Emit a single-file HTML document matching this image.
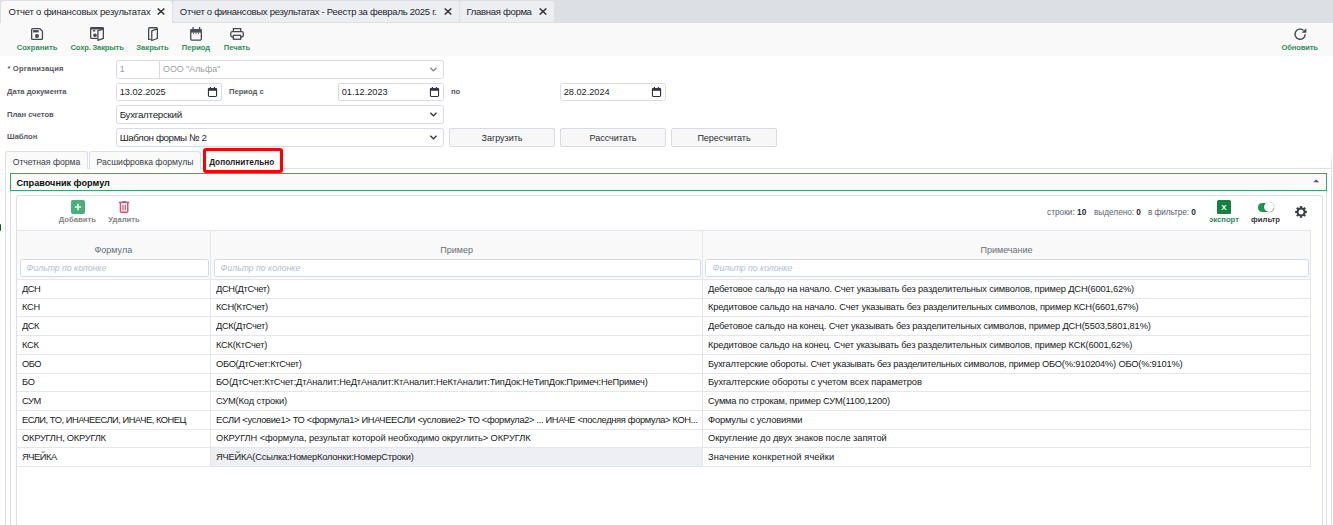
<!DOCTYPE html>
<html lang="ru"><head><meta charset="utf-8"><title>Отчет о финансовых результатах</title>
<style>
*{box-sizing:border-box;margin:0;padding:0}
html,body{width:1333px;height:525px;overflow:hidden;background:#fff}
body{font-family:"Liberation Sans",sans-serif;font-size:9px;color:#1d1d1f;position:relative}
.abs{position:absolute}
i{font-style:normal}
.tabbar{left:0;top:0;width:1333px;height:23px;background:#dcdfe4}
.ttab{position:absolute;top:1px;height:21px;border-radius:2.5px;background:#eceef2;font-size:9.5px;line-height:22.6px;padding-left:8.5px;white-space:nowrap;color:#23252b}
.ttab.act{background:#f9f9f9;height:22px;border-radius:3px 3px 0 0}
.ttab .x{position:absolute;right:7.2px;top:7.1px;width:8px;height:7px}
.toolbar{left:0;top:23px;width:1333px;height:33px;background:#f9f9f9}
.tbtn{position:absolute;top:42.7px;font-size:7.6px;line-height:9px;font-weight:bold;color:#2f8f5b;white-space:nowrap;transform:translateX(-50%)}
.ico{position:absolute}
.lbl{position:absolute;font-size:7.6px;line-height:9px;font-weight:bold;color:#56575e;white-space:nowrap}
.inp{position:absolute;border:1px solid #d7dae8;border-radius:2.5px;background:#fff;font-size:9.2px;white-space:nowrap;padding-left:2.7px}
.btn{position:absolute;top:128px;height:18.5px;width:106px;border:1px solid #d9dbe3;border-radius:2px;background:#f7f7f8;font-size:9px;line-height:19px;text-align:center;color:#2a2c33}
.ptab{position:absolute;top:151px;height:18px;border:1px solid #dcdfe9;border-bottom:none;border-radius:3px 3px 0 0;background:#fafafa;font-size:8.65px;line-height:20.5px;text-align:center;color:#3a3c44;white-space:nowrap}
.vline{position:absolute;width:1px;background:#dcdfeb}
.hline{position:absolute;height:1px;background:#dcdfeb}
.hdr{position:absolute;top:244.5px;font-size:9px;line-height:10px;color:#696c77;white-space:nowrap;transform:translateX(-50%)}
.flt{position:absolute;top:259px;height:18px;border:1px solid #d5d8e8;border-radius:2.5px;background:#fff;font-size:8.7px;font-style:italic;color:#b5bad2;line-height:16.5px;padding-left:5.5px}
.row{position:absolute;left:17px;width:1294px;border-bottom:1px solid #e3e5f0;font-size:9.3px;white-space:nowrap;color:#17181c}
.row span{position:absolute;top:0;overflow:hidden}
.row .sel{position:absolute;left:194px;width:491px;top:0;bottom:0;background:#eeeff5}
.c1{left:5px;width:188px}.c2{left:199px;width:486px}.c3{left:691px;width:600px}
.cnt{position:absolute;top:206.5px;font-size:8.3px;line-height:10px;color:#5b5f72;white-space:nowrap}
.cnt b{color:#2a2c3a}
.glbl{position:absolute;top:214.7px;font-size:7.7px;line-height:9px;font-weight:bold;white-space:nowrap;transform:translateX(-50%)}
</style></head><body>
<div class="abs tabbar"></div>
<div class="ttab act" style="left:1px;width:171px;padding-left:7.500px;letter-spacing:-0.180px">Отчет о финансовых результатах<svg class="x" viewBox="0 0 8 7"><path d="M0.700 0.500L7.300 6.500M7.300 0.500L0.700 6.500" stroke="#2b2d33" stroke-width="1.450"/></svg></div>
<div class="ttab" style="left:173px;width:286px;padding-left:6.800px;letter-spacing:-0.265px">Отчет о финансовых результатах - Реестр за февраль 2025 г.<svg class="x" viewBox="0 0 8 7"><path d="M0.700 0.500L7.300 6.500M7.300 0.500L0.700 6.500" stroke="#2b2d33" stroke-width="1.450"/></svg></div>
<div class="ttab" style="left:460px;width:94px;padding-left:6.500px;letter-spacing:-0.300px">Главная форма<svg class="x" viewBox="0 0 8 7"><path d="M0.700 0.500L7.300 6.500M7.300 0.500L0.700 6.500" stroke="#2b2d33" stroke-width="1.450"/></svg></div>
<div class="abs toolbar"></div>

<!-- toolbar icons -->
<svg class="ico" style="left:28px;top:25px" width="18" height="18" viewBox="28 25 18 18"><path d="M32.650 28.700H39.900L42.450 31.250V38.400a1 1 0 0 1-1 1H32.650a1 1 0 0 1-1-1V29.700a1 1 0 0 1 1-1z" fill="none" stroke="#45484f" stroke-width="1.300"/><rect x="33.100" y="30.100" width="5.600" height="2.300" fill="#45484f"/><circle cx="37" cy="36" r="2" fill="#45484f"/></svg>
<svg class="ico" style="left:88px;top:25px" width="18" height="18" viewBox="88 25 18 18"><path d="M97 38.400H91.650a1 1 0 0 1-1-1V28.650a1 1 0 0 1 1-1H102.350a1 1 0 0 1 1 1V38.300" fill="none" stroke="#45484f" stroke-width="1.300"/><rect x="90.300" y="27.200" width="13.500" height="2.200" rx="0.800" fill="#45484f"/><rect x="92.900" y="30.100" width="2.400" height="1.400" fill="#45484f"/><circle cx="95" cy="35.200" r="1.800" fill="#45484f"/><path d="M97.900 30.900L103.350 28.900V38.400L97.900 40.400z" fill="#f9f9f9" stroke="#45484f" stroke-width="1.300" stroke-linejoin="round"/></svg>
<svg class="ico" style="left:145px;top:25px" width="18" height="18" viewBox="145 25 18 18"><path d="M150.700 39.300H148.650V28.750a1 1 0 0 1 1-1H156.350a1 1 0 0 1 1 1V38.400" fill="none" stroke="#45484f" stroke-width="1.300"/><path d="M151.750 30.900L157.350 28.800V38.500L151.750 40.500z" fill="#f9f9f9" stroke="#45484f" stroke-width="1.300" stroke-linejoin="round"/></svg>
<svg class="ico" style="left:187px;top:25px" width="18" height="18" viewBox="187 25 18 18"><rect x="190.750" y="29.750" width="10.600" height="10.350" rx="1" fill="none" stroke="#45484f" stroke-width="1.300"/><rect x="190.500" y="29.300" width="11.100" height="3.300" fill="#4d5058"/><path d="M193.100 27.100v2.600M199.600 27.100v2.600" stroke="#45484f" stroke-width="1.300"/><path d="M193.600 32.500v1.700M196.050 32.500v1.700M198.500 32.500v1.700" stroke="#45484f" stroke-width="1" opacity="0.800"/></svg>
<svg class="ico" style="left:228px;top:25px" width="18" height="18" viewBox="228 25 18 18"><path d="M233.400 31.800V28.650h7.300v3.150" fill="none" stroke="#45484f" stroke-width="1.300"/><rect x="230.750" y="31.600" width="12.600" height="5.400" rx="1.700" fill="none" stroke="#45484f" stroke-width="1.300"/><rect x="233.400" y="35.300" width="7.300" height="3.950" fill="#f9f9f9" stroke="#45484f" stroke-width="1.300"/></svg>
<svg class="ico" style="left:1292px;top:27px" width="16" height="14" viewBox="0 0 16 14"><path d="M13.200 7.200a5.100 5.100 0 1 1-1.700-3.800" fill="none" stroke="#45484f" stroke-width="1.400"/><path d="M14.300 1.200v4.600h-4.600z" fill="#45484f"/></svg>
<div class="tbtn" style="left:37px">Сохранить</div>
<div class="tbtn" style="left:97.100px;letter-spacing:-0.170px">Сохр. Закрыть</div>
<div class="tbtn" style="left:152.500px">Закрыть</div>
<div class="tbtn" style="left:196px">Период</div>
<div class="tbtn" style="left:237px">Печать</div>
<div class="tbtn" style="left:1299.600px;letter-spacing:-0.150px">Обновить</div>

<div class="lbl" style="left:7.400px;top:63.700px;letter-spacing:0.180px">* Организация</div>
<div class="lbl" style="left:7px;top:86.700px">Дата документа</div>
<div class="lbl" style="left:7px;top:109.700px">План счетов</div>
<div class="lbl" style="left:7px;top:131.700px">Шаблон</div>
<div class="lbl" style="left:229px;top:86.700px">Период с</div>
<div class="lbl" style="left:451px;top:86.700px">по</div>

<div class="inp" style="left:116px;top:60px;width:328px;height:18.500px;line-height:16.500px;font-size:8.850px;color:#9b9da4">1<i class="abs" style="left:42px;top:0;bottom:0;border-left:1px solid #d7dae8;padding-left:3px">ООО "Альфа"</i><svg class="abs" style="left:312px;top:6px" width="9" height="6" viewBox="0 0 9 6"><path d="M1.400 0.700L4.450 3.900L7.500 0.700" fill="none" stroke="#808289" stroke-width="1.300"/></svg></div>
<div class="inp" style="left:116px;top:83px;width:106px;height:17.500px;line-height:16px">13.02.2025<svg class="abs cal" style="left:89px;top:1px" width="13" height="14" viewBox="206 85 13 14"><rect x="208.450" y="88.750" width="8.100" height="7.700" rx="0.900" fill="none" stroke="#2f313a" stroke-width="1.100"/><rect x="207.900" y="88.200" width="9.200" height="2.500" rx="0.600" fill="#2f313a"/><path d="M210.400 86.900v1.800M214.500 86.900v1.800" stroke="#2f313a" stroke-width="1.200"/></svg></div>
<div class="inp" style="left:338px;top:83px;width:106px;height:17.500px;line-height:16px">01.12.2023<svg class="abs cal" style="left:89px;top:1px" width="13" height="14" viewBox="206 85 13 14"><rect x="208.450" y="88.750" width="8.100" height="7.700" rx="0.900" fill="none" stroke="#2f313a" stroke-width="1.100"/><rect x="207.900" y="88.200" width="9.200" height="2.500" rx="0.600" fill="#2f313a"/><path d="M210.400 86.900v1.800M214.500 86.900v1.800" stroke="#2f313a" stroke-width="1.200"/></svg></div>
<div class="inp" style="left:560px;top:83px;width:106px;height:17.500px;line-height:16px;padding-left:2.700px">28.02.2024<svg class="abs cal" style="left:89px;top:1px" width="13" height="14" viewBox="206 85 13 14"><rect x="208.450" y="88.750" width="8.100" height="7.700" rx="0.900" fill="none" stroke="#2f313a" stroke-width="1.100"/><rect x="207.900" y="88.200" width="9.200" height="2.500" rx="0.600" fill="#2f313a"/><path d="M210.400 86.900v1.800M214.500 86.900v1.800" stroke="#2f313a" stroke-width="1.200"/></svg></div>
<div class="inp" style="left:116px;top:105px;width:328px;height:19px;line-height:17.500px;font-size:9.800px;letter-spacing:-0.280px">Бухгалтерский<svg class="abs" style="left:312px;top:6px" width="9" height="6" viewBox="0 0 9 6"><path d="M1.400 0.700L4.450 3.900L7.500 0.700" fill="none" stroke="#2c2e36" stroke-width="1.300"/></svg></div>
<div class="inp" style="left:116px;top:128px;width:328px;height:18.500px;line-height:17px;font-size:9.800px;letter-spacing:-0.400px">Шаблон формы № 2<svg class="abs" style="left:312px;top:6px" width="9" height="6" viewBox="0 0 9 6"><path d="M1.400 0.700L4.450 3.900L7.500 0.700" fill="none" stroke="#2c2e36" stroke-width="1.300"/></svg></div>
<div class="btn" style="left:449px">Загрузить</div>
<div class="btn" style="left:560px">Рассчитать</div>
<div class="btn" style="left:671px">Пересчитать</div>

<div class="abs" style="left:0;top:224.300px;width:1.100px;height:7px;background:#046404;border-radius:0 1px 1px 0"></div>
<!-- panel -->
<div class="hline" style="left:6px;top:168px;width:1326px"></div>
<div class="vline" style="left:5px;top:153px;height:372px"></div>
<div class="vline" style="left:1331px;top:153px;height:372px;background:linear-gradient(#fff,#dcdfeb 12px)"></div>
<div class="ptab" style="left:5px;width:83px">Отчетная форма</div>
<div class="ptab" style="left:89px;width:112px">Расшифровка формулы</div>
<div class="abs" style="left:203px;top:148px;width:80px;height:25px;border:3px solid #ff0000;border-radius:3px;background:#fff"></div>
<div class="abs" style="left:201.700px;top:157.800px;width:80px;text-align:center;font-size:8.250px;line-height:10px;font-weight:bold;color:#1d1d1f">Дополнительно</div>

<div class="abs" style="left:10px;top:173px;width:1317px;height:18px;border:1px solid #37a862;background:#fafafa;font-size:9.150px;font-weight:bold;line-height:18.500px;padding-left:5.500px;color:#0c0c0e">Справочник формул<svg class="abs" style="left:1302px;top:5.200px" width="7" height="4" viewBox="0 0 7 4"><path d="M0.200 3.300L3.200 0.400 6.200 3.300z" fill="#54565f"/></svg></div>
<div class="vline" style="left:10px;top:191px;height:334px"></div>
<div class="vline" style="left:1326px;top:191px;height:334px"></div>
<div class="abs" style="left:16px;top:195px;width:1307px;height:340px;border:1px solid #dcdfeb;border-radius:3px"></div>

<!-- grid toolbar -->
<div class="abs" style="left:71px;top:200px;width:14px;height:14px;border-radius:2px;background:#4cae7b"><svg class="abs" style="left:3px;top:3px" width="8" height="8" viewBox="0 0 8 8"><path d="M4 0.800v6.400M0.800 4h6.400" stroke="#eaf6ef" stroke-width="1.600"/></svg></div>
<div class="glbl" style="left:77.300px;color:#858589">Добавить</div>
<svg class="abs" style="left:117px;top:199px" width="14" height="16" viewBox="117 199 14 16"><path d="M120.450 203v8.350a1 1 0 0 0 1 1h5.300a1 1 0 0 0 1-1V203" fill="none" stroke="#dd4f6e" stroke-width="1.500"/><path d="M118.900 202.350h10.300" stroke="#dd4f6e" stroke-width="1.400"/><rect x="122.100" y="200.900" width="4.400" height="1.200" rx="0.500" fill="#dd4f6e"/><path d="M123 204.700v5.800M125.300 204.700v5.800" stroke="#dd4f6e" stroke-width="1.200"/></svg>
<div class="glbl" style="left:124px;color:#858589">Удалить</div>

<div class="cnt" style="left:1047px">строки: <b>10</b></div>
<div class="cnt" style="left:1094px;letter-spacing:-0.050px">выделено: <b>0</b></div>
<div class="cnt" style="left:1148px;letter-spacing:-0.110px">в фильтре: <b>0</b></div>
<div class="abs" style="left:1217px;top:200px;width:14px;height:14px;background:#17803f;border-radius:1.500px;color:#f4faf6;font-size:8px;font-weight:bold;line-height:15px;text-align:center">X</div>
<div class="glbl" style="left:1224px;color:#1f8a5c">экспорт</div>
<div class="abs" style="left:1258px;top:203px;width:16px;height:8.500px;border-radius:4.250px;background:#169a4f"></div>
<div class="abs" style="left:1264px;top:202.100px;width:10.400px;height:10.400px;border-radius:50%;background:#fff;box-shadow:0 0.300px 1.200px rgba(0,0,0,.5)"></div>
<div class="glbl" style="left:1265.500px;color:#3a3540">фильтр</div>
<svg class="abs" style="left:1294px;top:205px" width="14" height="14" viewBox="1294 205 14 14"><g fill="#3a3d47"><circle cx="1301.050" cy="211.900" r="4.500"/><rect x="1299.900" y="206" width="2.300" height="11.800" rx="0.400" transform="rotate(0 1301.050 211.900)"/><rect x="1299.900" y="206" width="2.300" height="11.800" rx="0.400" transform="rotate(45 1301.050 211.900)"/><rect x="1299.900" y="206" width="2.300" height="11.800" rx="0.400" transform="rotate(90 1301.050 211.900)"/><rect x="1299.900" y="206" width="2.300" height="11.800" rx="0.400" transform="rotate(135 1301.050 211.900)"/></g><circle cx="1301.050" cy="211.900" r="2.500" fill="#fff"/></svg>

<!-- grid -->
<div class="abs" style="left:17px;top:230px;width:1294px;height:50px;background:#f9f9fa;border-top:1px solid #e3e5f0;border-bottom:1px solid #e3e5f0"></div>
<div class="vline" style="left:210px;top:231px;height:236px;background:#e3e5f0"></div>
<div class="vline" style="left:702px;top:231px;height:236px;background:#e3e5f0"></div>
<div class="vline" style="left:1310px;top:231px;height:236px;background:#e3e5f0"></div>
<div class="hdr" style="left:113.300px">Формула</div>
<div class="hdr" style="left:456.600px">Пример</div>
<div class="hdr" style="left:1006.500px">Примечание</div>
<div class="flt" style="left:20px;width:189px">Фильтр по колонке</div>
<div class="flt" style="left:214px;width:487px">Фильтр по колонке</div>
<div class="flt" style="left:705px;width:604px;padding-left:6.500px">Фильтр по колонке</div>
<div class="row" style="top:280px;height:19px;line-height:18px"><span class="c1" style="letter-spacing:-0.450px">ДСН</span><span class="c2" style="letter-spacing:-0.332px">ДСН(ДтСчет)</span><span class="c3" style="letter-spacing:-0.154px">Дебетовое сальдо на начало. Счет указывать без разделительных символов, пример ДСН(6001,62%)</span></div>
<div class="row" style="top:299px;height:18px;line-height:17px"><span class="c1" style="letter-spacing:-0.317px">КСН</span><span class="c2" style="letter-spacing:-0.317px">КСН(КтСчет)</span><span class="c3" style="letter-spacing:-0.143px">Кредитовое сальдо на начало. Счет указывать без разделительных символов, пример КСН(6601,67%)</span></div>
<div class="row" style="top:317px;height:19px;line-height:18px"><span class="c1" style="letter-spacing:-0.450px">ДСК</span><span class="c2" style="letter-spacing:-0.368px">ДСК(ДтСчет)</span><span class="c3" style="letter-spacing:-0.155px">Дебетовое сальдо на конец. Счет указывать без разделительных символов, пример ДСН(5503,5801,81%)</span></div>
<div class="row" style="top:336px;height:19px;line-height:18px"><span class="c1" style="letter-spacing:-0.218px">КСК</span><span class="c2" style="letter-spacing:-0.263px">КСК(КтСчет)</span><span class="c3" style="letter-spacing:-0.136px">Кредитовое сальдо на конец. Счет указывать без разделительных символов, пример КСК(6001,62%)</span></div>
<div class="row" style="top:355px;height:19px;line-height:18px"><span class="c1" style="letter-spacing:-0.450px">ОБО</span><span class="c2" style="letter-spacing:-0.284px">ОБО(ДтСчет:КтСчет)</span><span class="c3" style="letter-spacing:-0.199px">Бухгалтерские обороты. Счет указывать без разделительных символов, пример ОБО(%:910204%) ОБО(%:9101%)</span></div>
<div class="row" style="top:374px;height:18px;line-height:17px"><span class="c1" style="letter-spacing:-0.217px">БО</span><span class="c2" style="letter-spacing:-0.163px">БО(ДтСчет:КтСчет:ДтАналит:НеДтАналит:КтАналит:НеКтАналит:ТипДок:НеТипДок:Примеч:НеПримеч)</span><span class="c3" style="letter-spacing:-0.078px">Бухгалтерские обороты с учетом всех параметров</span></div>
<div class="row" style="top:392px;height:19px;line-height:18px"><span class="c1" style="letter-spacing:-0.421px">СУМ</span><span class="c2" style="letter-spacing:-0.144px">СУМ(Код строки)</span><span class="c3" style="letter-spacing:-0.181px">Сумма по строкам, пример СУМ(1100,1200)</span></div>
<div class="row" style="top:411px;height:19px;line-height:18px"><span class="c1" style="letter-spacing:-0.449px">ЕСЛИ, ТО, ИНАЧЕЕСЛИ, ИНАЧЕ, КОНЕЦ</span><span class="c2" style="letter-spacing:-0.320px">ЕСЛИ &lt;условие1&gt; ТО &lt;формула1&gt; ИНАЧЕЕСЛИ &lt;условие2&gt; ТО &lt;формула2&gt; ... ИНАЧЕ &lt;последняя формула&gt; КОН...</span><span class="c3" style="letter-spacing:-0.143px">Формулы с условиями</span></div>
<div class="row" style="top:430px;height:18px;line-height:17px"><span class="c1" style="letter-spacing:-0.245px">ОКРУГЛН, ОКРУГЛК</span><span class="c2" style="letter-spacing:-0.094px">ОКРУГЛН &lt;формула, результат которой необходимо округлить&gt; ОКРУГЛК</span><span class="c3" style="letter-spacing:-0.076px">Округление до двух знаков после запятой</span></div>
<div class="row" style="top:448px;height:19px;line-height:18px"><i class="sel"></i><span class="c1" style="letter-spacing:-0.450px">ЯЧЕЙКА</span><span class="c2" style="letter-spacing:-0.189px">ЯЧЕЙКА(Ссылка:НомерКолонки:НомерСтроки)</span><span class="c3" style="letter-spacing:0.079px">Значение конкретной ячейки</span></div>
</body></html>
